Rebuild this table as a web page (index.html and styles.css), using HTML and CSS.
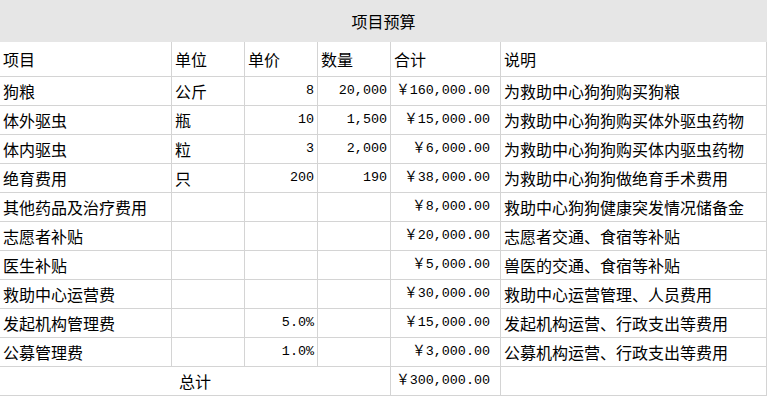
FILE: index.html
```html
<!DOCTYPE html>
<html lang="zh-CN">
<head>
<meta charset="utf-8">
<title>项目预算</title>
<link rel="stylesheet" href="styles.css">
</head>
<body>
<div class="sheet">
  <div class="title">项目预算</div>
  <div class="grid">
    <div class="cell">项目</div><div class="cell">单位</div><div class="cell">单价</div><div class="cell">数量</div><div class="cell">合计</div><div class="cell">说明</div>

    <div class="cell">狗粮</div><div class="cell">公斤</div><div class="cell num">8</div><div class="cell num">20,000</div><div class="cell num money">￥160,000.00</div><div class="cell">为救助中心狗狗购买狗粮</div>

    <div class="cell">体外驱虫</div><div class="cell">瓶</div><div class="cell num">10</div><div class="cell num">1,500</div><div class="cell num money">￥15,000.00</div><div class="cell">为救助中心狗狗购买体外驱虫药物</div>

    <div class="cell">体内驱虫</div><div class="cell">粒</div><div class="cell num">3</div><div class="cell num">2,000</div><div class="cell num money">￥6,000.00</div><div class="cell">为救助中心狗狗购买体内驱虫药物</div>

    <div class="cell">绝育费用</div><div class="cell">只</div><div class="cell num">200</div><div class="cell num">190</div><div class="cell num money">￥38,000.00</div><div class="cell">为救助中心狗狗做绝育手术费用</div>

    <div class="cell">其他药品及治疗费用</div><div class="cell"></div><div class="cell"></div><div class="cell"></div><div class="cell num money">￥8,000.00</div><div class="cell">救助中心狗狗健康突发情况储备金</div>

    <div class="cell">志愿者补贴</div><div class="cell"></div><div class="cell"></div><div class="cell"></div><div class="cell num money">￥20,000.00</div><div class="cell">志愿者交通、食宿等补贴</div>

    <div class="cell">医生补贴</div><div class="cell"></div><div class="cell"></div><div class="cell"></div><div class="cell num money">￥5,000.00</div><div class="cell">兽医的交通、食宿等补贴</div>

    <div class="cell">救助中心运营费</div><div class="cell"></div><div class="cell"></div><div class="cell"></div><div class="cell num money">￥30,000.00</div><div class="cell">救助中心运营管理、人员费用</div>

    <div class="cell">发起机构管理费</div><div class="cell"></div><div class="cell num">5.0%</div><div class="cell"></div><div class="cell num money">￥15,000.00</div><div class="cell">发起机构运营、行政支出等费用</div>

    <div class="cell">公募管理费</div><div class="cell"></div><div class="cell num">1.0%</div><div class="cell"></div><div class="cell num money">￥3,000.00</div><div class="cell">公募机构运营、行政支出等费用</div>

    <div class="cell total">总计</div><div class="cell num money">￥300,000.00</div><div class="cell"></div>
  </div>
</div>
</body>
</html>
```

FILE: styles.css
```css
html, body {
  margin: 0;
  padding: 0;
  background: #ffffff;
}

.sheet {
  width: 767px;
  font-family: "Noto Sans CJK SC", "Noto Sans", sans-serif;
  font-size: 16px;
  color: #000000;
}

.title {
  height: 42px;
  background: #e6e6e6;
  display: flex;
  align-items: center;
  justify-content: center;
}

.grid {
  display: grid;
  grid-template-columns: 171px 72px 72px 72px 109px 265px;
  grid-template-rows: 34px repeat(11, 28px);
  column-gap: 1px;
  row-gap: 1px;
  padding: 0 1px 1px 0;
  background: #d4d4d4;
}

.cell {
  background: #ffffff;
  display: flex;
  align-items: center;
  padding: 0 3px;
  white-space: nowrap;
  overflow: hidden;
  line-height: 20px;
}

.num {
  justify-content: flex-end;
  font-family: "Liberation Mono", "Noto Sans CJK SC", monospace;
  font-size: 13.4px;
}

.money {
  padding-right: 10px;
}

.total {
  grid-column: span 4;
  justify-content: center;
}
```
